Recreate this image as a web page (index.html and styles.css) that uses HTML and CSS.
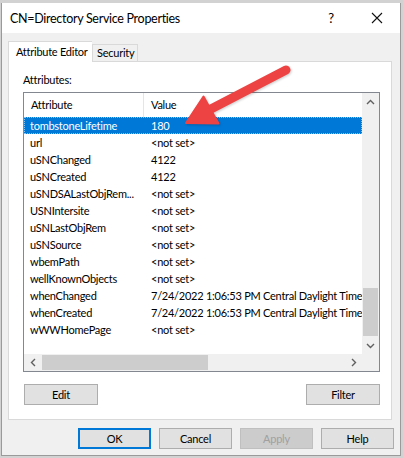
FILE: index.html
```html
<!DOCTYPE html>
<html lang="en">
<head>
  <meta charset="UTF-8" />
  <meta name="viewport" content="width=device-width,initial-scale=1.0"/>
  <title>CN=Directory Service Properties</title>
  <link rel="stylesheet" href="styles.css">
</head>
<body>

<div class="window">
  <div class="titlebar">
    <span class="title">CN=Directory Service Properties</span>
    <span class="help-btn">?</span>
    <span class="close-btn">
      <svg width="12" height="12" viewBox="0 0 12 12"><path d="M1 1 L11 11 M11 1 L1 11" stroke="#111" stroke-width="1.1" fill="none"/></svg>
    </span>
  </div>

  <div class="dlg">
    <div class="tabs">
      <div class="tab active">Attribute Editor</div>
      <div class="tab">Security</div>
    </div>

    <div class="panel">
      <div class="label">Attributes:</div>

      <div class="list">
        <div class="view">
          <div class="head">
            <span class="cell">Attribute</span>
            <span class="cell">Value</span>
          </div>
          <div class="row sel"><span class="cell">tombstoneLifetime</span><span class="cell">180</span></div>
          <div class="row"><span class="cell">url</span><span class="cell">&lt;not set&gt;</span></div>
          <div class="row"><span class="cell">uSNChanged</span><span class="cell">4122</span></div>
          <div class="row"><span class="cell">uSNCreated</span><span class="cell">4122</span></div>
          <div class="row"><span class="cell">uSNDSALastObjRem...</span><span class="cell">&lt;not set&gt;</span></div>
          <div class="row"><span class="cell">USNIntersite</span><span class="cell">&lt;not set&gt;</span></div>
          <div class="row"><span class="cell">uSNLastObjRem</span><span class="cell">&lt;not set&gt;</span></div>
          <div class="row"><span class="cell">uSNSource</span><span class="cell">&lt;not set&gt;</span></div>
          <div class="row"><span class="cell">wbemPath</span><span class="cell">&lt;not set&gt;</span></div>
          <div class="row"><span class="cell">wellKnownObjects</span><span class="cell">&lt;not set&gt;</span></div>
          <div class="row"><span class="cell">whenChanged</span><span class="cell">7/24/2022 1:06:53 PM Central Daylight Time</span></div>
          <div class="row"><span class="cell">whenCreated</span><span class="cell">7/24/2022 1:06:53 PM Central Daylight Time</span></div>
          <div class="row"><span class="cell">wWWHomePage</span><span class="cell">&lt;not set&gt;</span></div>
        </div>

        <!-- vertical scrollbar -->
        <div class="vscroll">
          <div class="sbtn">
            <svg width="9" height="6" viewBox="0 0 9 6"><path d="M1 5 L4.5 1.5 L8 5" stroke="#606060" stroke-width="1.4" fill="none"/></svg>
          </div>
          <div class="vtrack"><div class="vthumb"></div></div>
          <div class="sbtn">
            <svg width="9" height="6" viewBox="0 0 9 6"><path d="M1 1 L4.5 4.5 L8 1" stroke="#606060" stroke-width="1.4" fill="none"/></svg>
          </div>
        </div>

        <!-- horizontal scrollbar -->
        <div class="hscroll">
          <div class="sbtn">
            <svg width="6" height="9" viewBox="0 0 6 9"><path d="M5 1 L1.5 4.5 L5 8" stroke="#606060" stroke-width="1.4" fill="none"/></svg>
          </div>
          <div class="htrack"><div class="hthumb"></div></div>
          <div class="sbtn">
            <svg width="6" height="9" viewBox="0 0 6 9"><path d="M1 1 L4.5 4.5 L1 8" stroke="#606060" stroke-width="1.4" fill="none"/></svg>
          </div>
        </div>
        <div class="corner"></div>
      </div>

      <div class="panel-btns">
        <button class="btn">Edit</button>
        <button class="btn">Filter</button>
      </div>
    </div>

    <div class="footer">
      <button class="btn default">OK</button>
      <button class="btn">Cancel</button>
      <button class="btn" disabled>Apply</button>
      <button class="btn">Help</button>
    </div>
  </div>
</div>

<!-- red callout arrow -->
<svg class="callout" width="403" height="458" viewBox="0 0 403 458">
  <line x1="209" y1="110" x2="286" y2="70" stroke="#ee4343" stroke-width="9" stroke-linecap="round"/>
  <polygon points="186,123 203.5,96.5 218.5,123.5" fill="#ee4343" stroke="#ee4343" stroke-width="2" stroke-linejoin="round"/>
</svg>

</body>
</html>
```

FILE: styles.css
```css
html, body {
  margin: 0;
  padding: 0;
}

body {
  position: relative;
  width: 403px;
  height: 458px;
  overflow: hidden;
  background: #d2d2d2;
  font-family: 'Lato', 'Noto Sans', sans-serif;
  font-size: 11px;
  letter-spacing: -0.25px;
  color: #000;
}

.window {
  width: 398px;
  margin: 3px 0 0 1px;
  border: 1px solid #9a9a9a;
  border-top: none;
  background: #f0f0f0;
}

/* title bar */
.titlebar {
  height: 30px;
  display: flex;
  align-items: center;
  background: #fff;
  padding-left: 8px;
}

.title {
  flex: 1;
  font-size: 12.5px;
  letter-spacing: -0.3px;
}

.help-btn {
  width: 46px;
  text-align: center;
  font-size: 13px;
}

.close-btn {
  width: 46px;
  display: flex;
  justify-content: center;
}

/* dialog body */
.dlg {
  padding: 8px 6px 6px 6px;
}

.tabs {
  display: flex;
  align-items: flex-end;
  height: 20px;
}

.tab {
  box-sizing: border-box;
  width: 46px;
  height: 17px;
  line-height: 16px;
  padding: 0 4px;
  white-space: nowrap;
  border: 1px solid #d9d9d9;
  border-bottom: none;
  background: #f0f0f0;
}

.tab.active {
  position: relative;
  z-index: 1;
  width: 84px;
  height: 21px;
  line-height: 20px;
  padding: 0 6px 0 7px;
  margin-bottom: -1px;
  background: #fff;
  border-right: none;
}

.panel {
  border: 1px solid #d9d9d9;
  background: #fff;
  padding: 10px 12px 14px 14px;
  width: 356px;
}

.label {
  line-height: 16px;
  margin-bottom: 4px;
}

/* list view */
.list {
  width: 357px;
  height: 280px;
  box-sizing: border-box;
  border: 1px solid #828790;
  display: grid;
  grid-template-columns: 1fr 17px;
  grid-template-rows: 1fr 17px;
  background: #fff;
}

.view {
  overflow: hidden;
  white-space: nowrap;
}

.head,
.row {
  display: grid;
  grid-template-columns: 120px 1fr;
}

.head {
  height: 24px;
  line-height: 23px;
}

.head .cell:first-child {
  border-right: 1px solid #e5e5e5;
}

.cell {
  padding-left: 7px;
  overflow: hidden;
}

.row {
  height: 17px;
  line-height: 17px;
}

.row .cell:first-child {
  padding-left: 6px;
}

.row.sel {
  background: #0078d7;
  color: #fff;
  outline: 1px dotted #8cc4f0;
  outline-offset: -1px;
}

.vscroll {
  display: flex;
  flex-direction: column;
  background: #f0f0f0;
}

.sbtn {
  width: 17px;
  height: 17px;
  display: flex;
  align-items: center;
  justify-content: center;
  flex: none;
}

.vtrack {
  flex: 1;
  display: flex;
  flex-direction: column;
}

.vthumb {
  margin: auto 1px 1px;
  height: 48px;
  background: #cdcdcd;
}

.hscroll {
  display: flex;
  background: #f0f0f0;
}

.htrack {
  flex: 1;
  display: flex;
}

.hthumb {
  width: 166px;
  margin: 1px 0 1px 1px;
  background: #cdcdcd;
}

.corner {
  background: #f0f0f0;
}

/* buttons */
.btn {
  width: 74px;
  height: 21px;
  padding: 0;
  font: inherit;
  letter-spacing: inherit;
  color: #000;
  background: #e1e1e1;
  border: 1px solid #adadad;
}

.btn.default {
  border: 2px solid #0078d7;
}

.btn:disabled {
  color: #a0a0a0;
  background: #cccccc;
  border-color: #bfbfbf;
}

.panel-btns {
  display: flex;
  justify-content: space-between;
  margin: 12px 0 0 1px;
  width: 356px;
}

.footer {
  display: flex;
  justify-content: flex-end;
  gap: 8px;
  margin-top: 8px;
}

.footer .btn {
  width: 73px;
}

.callout {
  position: absolute;
  left: 0;
  top: 0;
  pointer-events: none;
  filter: drop-shadow(1px 1px 1px rgba(0,0,0,.2));
}
```
